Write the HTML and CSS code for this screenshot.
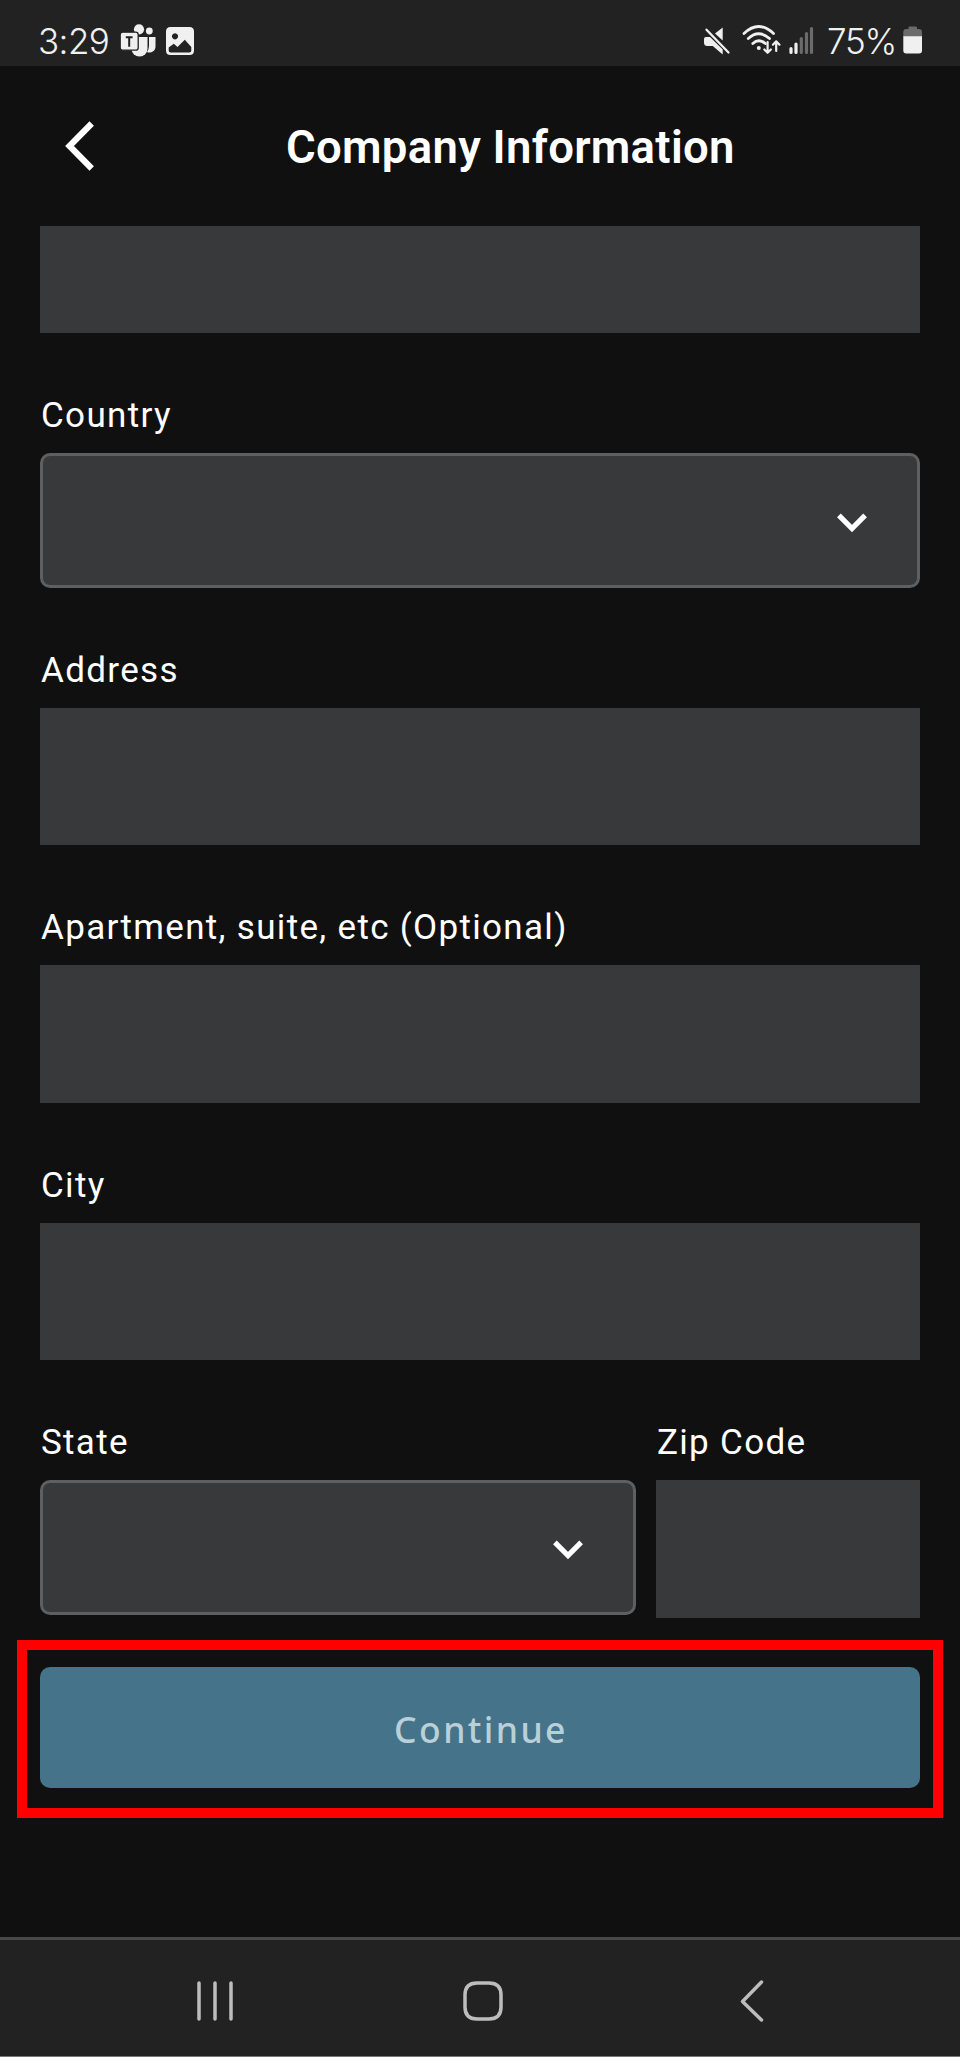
FILE: index.html
```html
<!DOCTYPE html>
<html lang="en">
<head>
<meta charset="utf-8">
<title>Company Information</title>
<link rel="stylesheet" href="styles.css">
</head>
<body>
<div class="screen">
  <div class="status-bar">
    <div class="status-left">
      <span class="clock">3:29</span>
      <svg class="teams" width="36" height="34" viewBox="0 0 36 34">
        <circle cx="19" cy="5.3" r="5.1"/>
        <circle cx="29.3" cy="7" r="3.4"/>
        <path d="M29 13h6.5v9.500a6 6 0 0 1-8.500 5.500q2-3 2-6z"/>
        <path d="M11.500 13H27.500v11.500a8 8 0 0 1-16 0z"/>
        <rect class="tile" x=".2" y="8.200" width="18" height="18" rx="2.500"/>
        <path class="tee" d="M5.800 13.300h6.800M9.200 13.300v9.500"/>
      </svg>
      <svg class="picture" width="28" height="28" viewBox="0 0 28 28">
        <path fill-rule="evenodd" d="M4.500 0h19Q28 0 28 4.500v19Q28 28 23.500 28h-19Q0 28 0 23.500v-19Q0 0 4.500 0zM9 6.200a3.100 3.100 0 1 0 .01 0zM2.700 20.500v3q0 2 2 2h18.600q2 0 2-2v-3.500l-6.500-7.300-7.300 7.300-3.700-3.300z"/>
      </svg>
    </div>
    <div class="status-right">
      <svg class="mute" width="28" height="28" viewBox="0 0 28 28">
        <path d="M0 12q0-2 2-2H6L18.700 22.500v5L8.800 19H3.500Q0 19 0 15.500zM11 6.500l7.700-6v13z"/>
        <path class="slash" d="M2.500 2.700L24.500 25.500"/>
      </svg>
      <svg class="wifi" width="40" height="30" viewBox="0 0 40 30">
        <path class="arc" d="M2 8.500Q16.500-5.500 31.500 8.500M6.300 13.500Q16.500 4 27.500 13.500M10.800 18.500q6-5.500 12.500 0"/>
        <circle cx="16.800" cy="23" r="2"/>
        <path class="arrows" d="M25.600 17V27.500M22.300 24.500l3.300 3.300 3.300-3.300M34.200 26V16.500M30.900 19.700l3.300-3.300 3.300 3.300"/>
      </svg>
      <svg class="signal" width="26" height="28" viewBox="0 0 26 28">
        <path d="M2 22.500v4M7 18v8.500"/>
        <path class="weak" d="M12.300 12.500v14M17.500 7.500v19M22.500 2.500v24"/>
      </svg>
      <span class="percent">75%</span>
      <svg class="battery" width="20" height="28" viewBox="0 0 20 28">
        <path class="weak-fill" d="M5.500 3V1.500Q5.500.5 6.500.5h6q1.500 0 1.500 1V3h2q3 0 3 3v5H.3V6q0-3 3-3z"/>
        <path d="M.3 10.300H19V24.500q0 3-3 3H3.300q-3 0-3-3z"/>
      </svg>
    </div>
  </div>

  <div class="header">
    <svg class="back" width="32" height="52" viewBox="0 0 32 52"><path d="M27.700 3.500L5.500 26l22.200 22.500"/></svg>
    <h1 class="title">Company Information</h1>
  </div>

  <div class="form">
    <div class="input input-cut"></div>
    <div class="field">
      <div class="label">Country</div>
      <div class="select"><svg class="chevron" width="32" height="22" viewBox="0 0 32 22"><path d="M2.900 3.400L16 16.500 29.100 3.400"/></svg></div>
    </div>
    <div class="field">
      <div class="label">Address</div>
      <div class="input"></div>
    </div>
    <div class="field">
      <div class="label">Apartment, suite, etc (Optional)</div>
      <div class="input"></div>
    </div>
    <div class="field">
      <div class="label">City</div>
      <div class="input"></div>
    </div>
    <div class="row">
      <div class="field">
        <div class="label">State</div>
        <div class="select"><svg class="chevron" width="32" height="22" viewBox="0 0 32 22"><path d="M2.900 3.400L16 16.500 29.100 3.400"/></svg></div>
      </div>
      <div class="field">
        <div class="label">Zip Code</div>
        <div class="input"></div>
      </div>
    </div>
  </div>

  <div class="highlight">
    <div class="button"><span class="button-text">Continue</span></div>
  </div>

  <div class="nav-bar">
    <svg width="36" height="44" viewBox="0 0 36 44"><path d="M2 4v36M18 4v36M34 4v36"/></svg>
    <svg width="44" height="44" viewBox="0 0 44 44"><path d="M16 4h12Q40 4 40 16v12Q40 40 28 40H16Q4 40 4 28V16Q4 4 16 4z"/></svg>
    <svg width="26" height="44" viewBox="0 0 26 44"><path d="M22.500 3L3.500 22.500 22.500 41"/></svg>
  </div>
</div>
</body>
</html>
```
FILE: styles.css
```css
* { box-sizing: border-box; }
body { margin: 0; background: #101010; }
svg { display: block; flex: none; overflow: visible; }

.screen {
  width: 960px;
  height: 2057px;
  display: flex;
  flex-direction: column;
  background: #101010;
  color: #fff;
  font-family: Roboto, "Liberation Sans", sans-serif;
  overflow: hidden;
}

.status-bar {
  height: 66px;
  flex: none;
  display: flex;
  justify-content: space-between;
  padding: 0 37px 0 38px;
  background: #222;
  color: #f0f0f0;
  fill: #f0f0f0;
}
.status-left, .status-right { display: flex; align-items: flex-start; }
.clock, .percent {
  font-family: Inter, Roboto, sans-serif;
  font-weight: 350;
  font-size: 35px;
  line-height: 40px;
  margin-top: 21px;
  white-space: nowrap;
}
.clock { width: 82px; letter-spacing: -0.600px; }
.percent { width: 76px; letter-spacing: -1.200px; }
.teams { margin-top: 24px; }
.tile { stroke: #222; stroke-width: 1.3; }
.tee { stroke: #222; stroke-width: 2; fill: none; }
.picture { margin: 27px 0 0 10px; }
.mute { margin: 27px 10px 0 0; }
.slash { stroke: #f0f0f0; stroke-width: 2.3; stroke-linecap: round; }
.wifi { margin: 25px 7px 0 0; }
.arc { fill: none; stroke: #f0f0f0; stroke-width: 2.8; stroke-linecap: round; }
.arrows { fill: none; stroke: #f0f0f0; stroke-width: 2.2; stroke-linecap: round; stroke-linejoin: round; }
.signal { margin: 26px 12px 0 0; stroke: #f0f0f0; stroke-width: 3.200; stroke-linecap: round; }
.weak { stroke: #6b6b6b; }
.weak-fill { fill: #6b6b6b; }
.battery { margin: 26px 0 0 0; }

.header {
  height: 159.500px;
  flex: none;
  display: flex;
  align-items: flex-start;
  padding-left: 63.500px;
}
.back { margin-top: 53.500px; fill: none; stroke: #fff; stroke-width: 6.200; }
.title {
  margin: 54px 0 0 190.500px;
  font-size: 45.500px;
  line-height: 56px;
  font-weight: 600;
  letter-spacing: 0.280px;
  white-space: nowrap;
}

.form { padding: 0 40px; flex: none; }
.input { height: 137.500px; background: #38393a; }
.input-cut { height: 107.500px; }
.select {
  height: 134.500px;
  display: flex;
  align-items: center;
  justify-content: flex-end;
  padding-right: 49px;
  border: 3px solid #5c6063;
  border-radius: 10px;
  background: #38393a;
}
.chevron { fill: none; stroke: #fff; stroke-width: 5.200; margin-top: 5.500px; }
.field { padding-top: 61px; }
.label {
  height: 59px;
  padding-left: 1px;
  font-size: 35px;
  line-height: 44px;
  letter-spacing: 1.320px;
  white-space: nowrap;
}
.row { display: grid; grid-template-columns: 596px 264px; gap: 20px; }

.highlight {
  flex: none;
  height: 178px;
  margin: 22.500px 17px 0;
  padding: 17px 13px 0;
  border: 10px solid #f00;
}
.button {
  height: 121px;
  display: flex;
  justify-content: center;
  border-radius: 10px;
  background: #45738a;
  color: #bad0d8;
}
.button-text {
  font-family: "Noto Sans", sans-serif;
  font-weight: 500;
  font-size: 35.500px;
  line-height: 50px;
  letter-spacing: 2.400px;
  margin: 37px 0 0 2px;
}

.nav-bar {
  flex: none;
  height: 120px;
  margin-top: auto;
  display: flex;
  align-items: flex-start;
  padding: 38.500px 0 0 197px;
  background: #222;
  border-top: 3px solid #484848;
  border-bottom: 1px solid #777;
  fill: none;
  stroke: #bdbdbd;
  stroke-width: 3.500;
  stroke-linecap: round;
  stroke-linejoin: round;
}
.nav-bar svg + svg { margin-left: 228px; }
.nav-bar svg + svg + svg { margin-left: 234px; }
```
